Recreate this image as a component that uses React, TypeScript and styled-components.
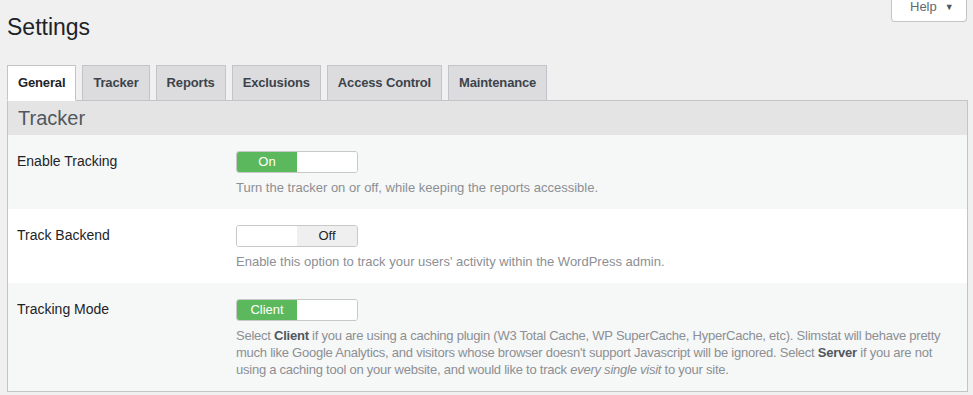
import React from 'react';
import styled, { createGlobalStyle } from 'styled-components';

const GlobalStyle = createGlobalStyle`
  html, body {
    margin: 0;
    padding: 0;
    background: #f0f0f1;
    font-family: "Liberation Sans", Arial, sans-serif;
    color: #1d2327;
  }
`;

const Wrap = styled.div`
  padding: 0 5px 0 7px;
`;

const TopBar = styled.div`
  display: flex;
  justify-content: space-between;
  align-items: flex-start;
`;

const Title = styled.h1`
  margin: 13px 0 0;
  font-size: 23px;
  font-weight: 400;
  line-height: 29px;
  color: #1d2327;
`;

const HelpButton = styled.button`
  display: flex;
  align-items: center;
  gap: 8px;
  height: 22px;
  width: 76px;
  margin-right: 1px;
  padding: 0 0 8px 18px;
  background: #fff;
  border: 1px solid #c3c4c7;
  border-top: none;
  border-radius: 0 0 4px 4px;
  font-family: inherit;
  font-size: 13px;
  line-height: 14px;
  color: #646970;
`;

const Caret = styled.span`
  font-size: 9px;
  color: #50575e;
`;

const TabBar = styled.nav`
  display: flex;
  gap: 6px;
  margin-top: 23px;
  position: relative;
  z-index: 1;
`;

const Tab = styled.a<{ $active?: boolean }>`
  display: block;
  height: 34px;
  padding: 0 10px;
  border: 1px solid #c3c4c7;
  border-bottom-color: ${p => (p.$active ? '#fff' : '#c3c4c7')};
  background: ${p => (p.$active ? '#fff' : '#dcdcde')};
  font-size: 13px;
  font-weight: 700;
  letter-spacing: -0.15px;
  line-height: 34px;
  color: ${p => (p.$active ? '#1d2327' : '#3c434a')};
  text-decoration: none;
`;

const Panel = styled.section`
  margin-top: -1px;
  border: 1px solid #c3c4c7;
  background: #fff;
`;

const PanelHeader = styled.h2`
  margin: 0;
  height: 34px;
  padding: 0 10px;
  background: #e4e4e4;
  font-size: 20px;
  font-weight: 400;
  line-height: 34px;
  color: #50575e;
`;

const Row = styled.div<{ $alt?: boolean }>`
  display: grid;
  grid-template-columns: 219px 1fr;
  padding: 16px 8px 13px 9px;
  background: ${p => (p.$alt ? '#f6f7f7' : '#fff')};
`;

const Label = styled.div`
  font-size: 14px;
  line-height: 20px;
  color: #1d2327;
`;

const Control = styled.div`
  display: flex;
  flex-direction: column;
  align-items: flex-start;
  gap: 6px;
`;

const Toggle = styled.div`
  display: flex;
  width: 120px;
  height: 20px;
  border: 1px solid #c8c8c8;
  border-radius: 3px;
  overflow: hidden;
  background: #fff;
`;

const ToggleHalf = styled.span<{ $on?: boolean; $off?: boolean }>`
  flex: 1;
  font-size: 13px;
  line-height: 20px;
  text-align: center;
  background: ${p => (p.$on ? '#5cb85c' : p.$off ? '#efefef' : '#fff')};
  color: ${p => (p.$on ? '#fff' : '#1d2327')};
`;

const Description = styled.p<{ $tight?: boolean }>`
  margin: 0;
  font-size: 13px;
  line-height: 17px;
  color: #8c8f94;
  letter-spacing: ${p => (p.$tight ? '-0.24px' : 'normal')};

  strong {
    font-weight: 700;
    color: #50575e;
  }
`;

const tabs = ['General', 'Tracker', 'Reports', 'Exclusions', 'Access Control', 'Maintenance'];

const App = () => {
  return (
    <>
      <GlobalStyle />
      <Wrap>
        <TopBar>
          <Title>Settings</Title>
          <HelpButton>
            Help <Caret>▼</Caret>
          </HelpButton>
        </TopBar>
        <TabBar>
          {tabs.map((t, i) => (
            <Tab key={t} $active={i === 0}>
              {t}
            </Tab>
          ))}
        </TabBar>
        <Panel>
          <PanelHeader>Tracker</PanelHeader>
          <Row $alt>
            <Label>Enable Tracking</Label>
            <Control>
              <Toggle>
                <ToggleHalf $on>On</ToggleHalf>
                <ToggleHalf />
              </Toggle>
              <Description>Turn the tracker on or off, while keeping the reports accessible.</Description>
            </Control>
          </Row>
          <Row>
            <Label>Track Backend</Label>
            <Control>
              <Toggle>
                <ToggleHalf />
                <ToggleHalf $off>Off</ToggleHalf>
              </Toggle>
              <Description>Enable this option to track your users' activity within the WordPress admin.</Description>
            </Control>
          </Row>
          <Row $alt>
            <Label>Tracking Mode</Label>
            <Control>
              <Toggle>
                <ToggleHalf $on>Client</ToggleHalf>
                <ToggleHalf />
              </Toggle>
              <Description $tight>
                Select <strong>Client</strong> if you are using a caching plugin (W3 Total Cache, WP SuperCache,
                HyperCache, etc). Slimstat will behave pretty much like Google Analytics, and visitors whose browser
                doesn't support Javascript will be ignored. Select <strong>Server</strong> if you are not using a
                caching tool on your website, and would like to track <em>every single visit</em> to your site.
              </Description>
            </Control>
          </Row>
        </Panel>
      </Wrap>
    </>
  );
};

export default App;
